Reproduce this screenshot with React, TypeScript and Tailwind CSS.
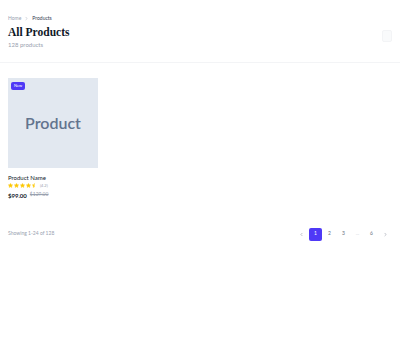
import React from 'react';
import { ChevronLeft, ChevronRight, Star, StarHalf } from 'lucide-react';

function Stars() {
  return (
    <div className="flex items-center gap-[1px]">
      {[0, 1, 2, 3].map(i => (
        <Star key={i} className="h-[5px] w-[5px] fill-yellow-400 text-yellow-400" strokeWidth={2} />
      ))}
      <StarHalf className="h-[5px] w-[5px] fill-yellow-400 text-yellow-400" strokeWidth={2} />
      <span className="ml-[2px] text-[4px] text-gray-400">(4.2)</span>
    </div>
  );
}

export default function App() {
  return (
    <div className="min-h-[337px] w-[400px] bg-white font-['Lato',sans-serif] text-gray-900">
      {/* Header */}
      <div className="flex items-start justify-between border-b border-gray-100 px-2 pb-[13px] pt-[15px]">
        <div>
          <div className="flex items-center gap-[3px] text-[5px]">
            <span className="text-gray-400">Home</span>
            <ChevronRight className="h-[5px] w-[5px] text-gray-400" />
            <span className="text-gray-700">Products</span>
          </div>
          <h1 className="mt-[2px] font-['Liberation_Serif',serif] text-[11.5px] font-bold leading-[14px]">All Products</h1>
          <p className="mt-[1px] text-[6px] text-gray-400">128 products</p>
        </div>
        <div className="mt-[15px] h-[12px] w-[10px] rounded-[2px] border border-gray-100 bg-gray-50" />
      </div>

      {/* Grid */}
      <div className="grid grid-cols-4 gap-2 px-2 pt-[15px]">
        <div>
          <div className="relative flex h-[90px] w-[90px] items-center justify-center bg-slate-200">
            <span className="absolute left-[3px] top-[4px] rounded-[2px] bg-indigo-600 px-[3px] py-[1px] text-[4px] text-white">New</span>
            <span className="text-[16px] font-semibold text-slate-500">Product</span>
          </div>
          <div className="mt-[5px] text-[6px] text-gray-900">Product Name</div>
          <div className="mt-[1px]"><Stars /></div>
          <div className="mt-[2px] flex items-center gap-[3px]">
            <span className="text-[6px] font-bold">$99.00</span>
            <span className="text-[5px] text-gray-400 line-through">$129.00</span>
          </div>
        </div>
      </div>

      {/* Footer */}
      <div className="mt-[28px] flex items-center justify-between px-2">
        <span className="text-[5px] text-gray-400">Showing 1-24 of 128</span>
        <div className="flex items-center gap-[1px] text-[5px] text-gray-500">
          <span className="flex h-[13px] w-[13px] items-center justify-center"><ChevronLeft className="h-[5px] w-[5px]" /></span>
          <span className="flex h-[13px] w-[13px] items-center justify-center rounded-[2px] bg-indigo-600 text-white">1</span>
          <span className="flex h-[13px] w-[13px] items-center justify-center">2</span>
          <span className="flex h-[13px] w-[13px] items-center justify-center">3</span>
          <span className="flex h-[13px] w-[13px] items-center justify-center text-gray-300">...</span>
          <span className="flex h-[13px] w-[13px] items-center justify-center">6</span>
          <span className="flex h-[13px] w-[13px] items-center justify-center"><ChevronRight className="h-[5px] w-[5px]" /></span>
        </div>
      </div>
    </div>
  );
}
